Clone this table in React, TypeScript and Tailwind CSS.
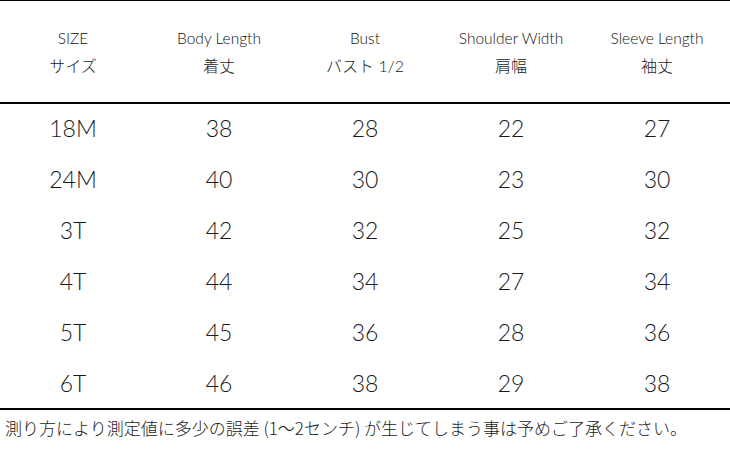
import React from "react";

const headers: [string, string][] = [
  ["SIZE", "サイズ"],
  ["Body Length", "着丈"],
  ["Bust", "バスト 1/2"],
  ["Shoulder Width", "肩幅"],
  ["Sleeve Length", "袖丈"],
];

const rows: string[][] = [
  ["18M", "38", "28", "22", "27"],
  ["24M", "40", "30", "23", "30"],
  ["3T", "42", "32", "25", "32"],
  ["4T", "44", "34", "27", "34"],
  ["5T", "45", "36", "28", "36"],
  ["6T", "46", "38", "29", "38"],
];

export default function App() {
  return (
    <div
      className="w-[730px] h-[450px] bg-white text-[#1a1a1a] overflow-hidden"
      style={{ fontFamily: '"Lato", "Noto Sans CJK JP", sans-serif' }}
    >
      <div className="border-t-[1.5px] border-black" />
      <div className="grid grid-cols-5 h-[101px] items-center">
        {headers.map(([en, ja]) => (
          <div key={en} className="flex flex-col items-center gap-[9px] pt-[1px]">
            <div className="text-[15.5px] leading-[18px] font-light text-[#111]">{en}</div>
            <div className="text-[16px] leading-[20px] font-light">{ja}</div>
          </div>
        ))}
      </div>
      <div className="border-t-[2px] border-black" />
      <div className="flex flex-col -mt-[2px]">
        {rows.map((r) => (
          <div key={r[0]} className="grid grid-cols-5 h-[51px] items-center">
            {r.map((c, i) => (
              <div key={i} className="text-center text-[23px] leading-[26px] font-light">
                {c}
              </div>
            ))}
          </div>
        ))}
      </div>
      <div className="border-t-[2px] border-black" />
      <div
        className="pl-[5px] pt-[8px] text-[17px] leading-[20px] whitespace-nowrap font-light"
        style={{ fontFamily: '"Noto Sans CJK JP", sans-serif' }}
      >
        測り方により測定値に多少の誤差 (1〜2センチ) が生じてしまう事は予めご了承ください。
      </div>
    </div>
  );
}
